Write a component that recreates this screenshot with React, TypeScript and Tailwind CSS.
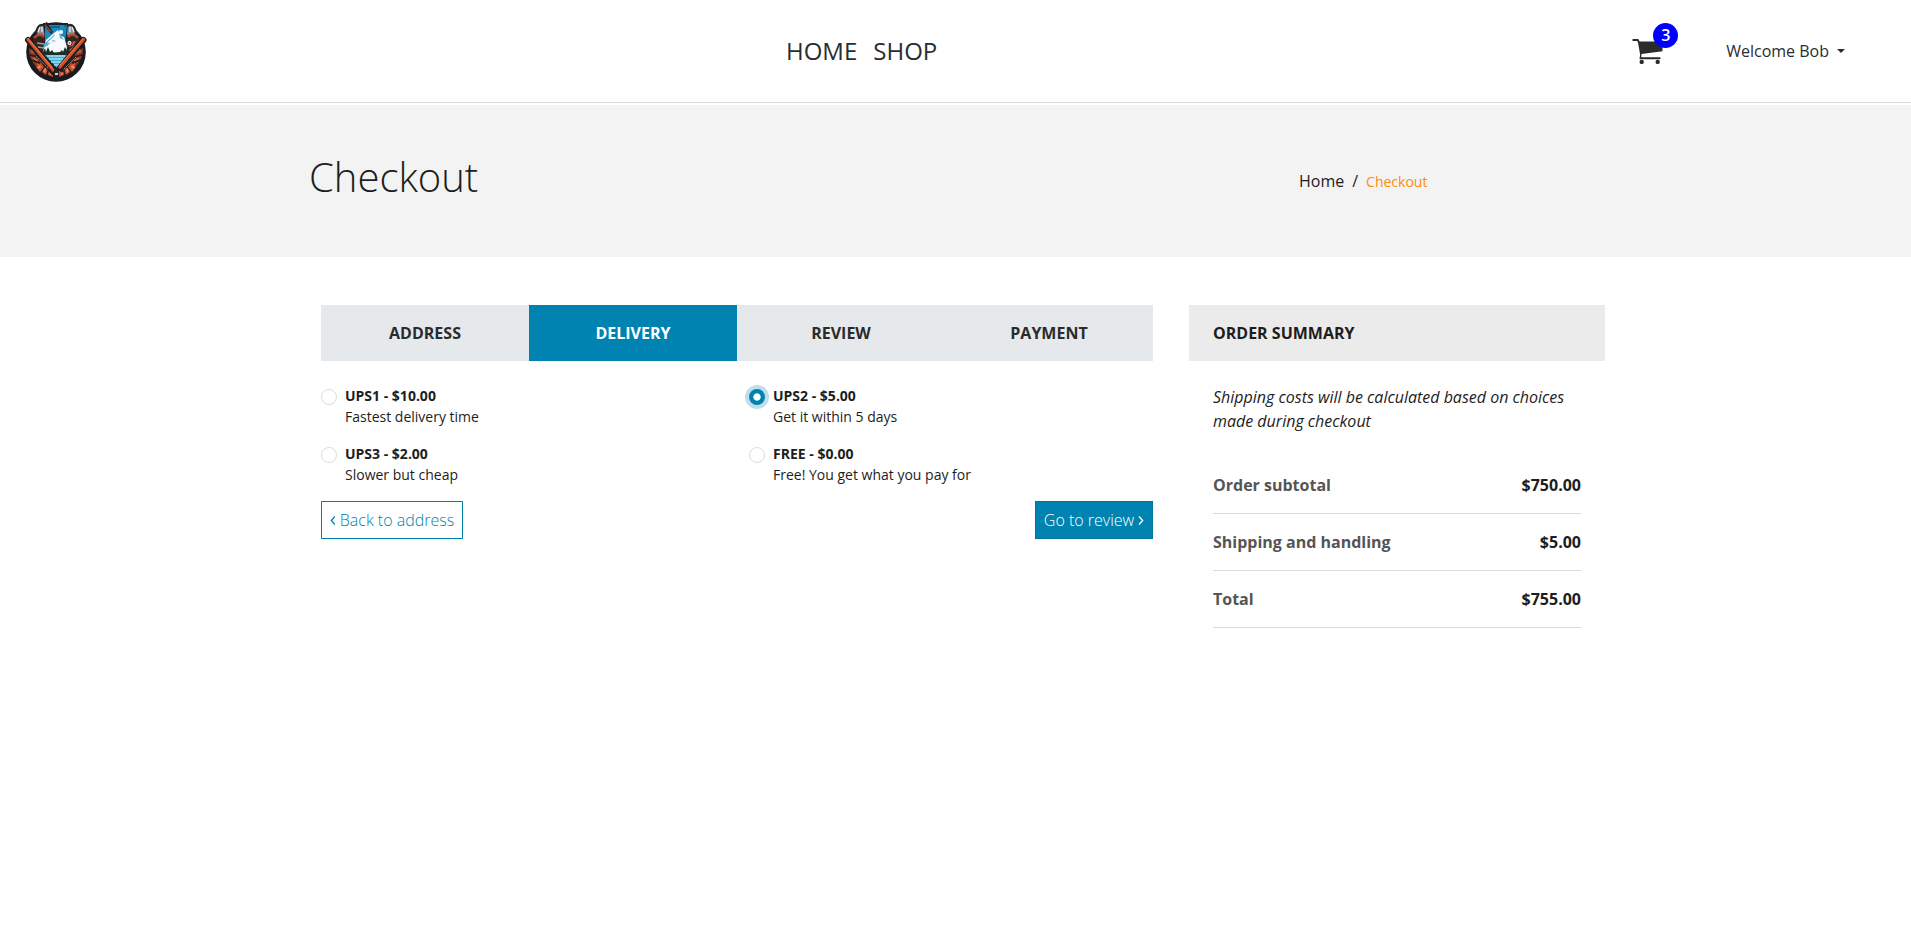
import React from "react";

const Logo = () => (
  <svg width="66" height="66" viewBox="0 0 66 66" className="block">
    <circle cx="33" cy="34" r="29.8" fill="#191b20" />
    <path d="M13 19c0-9 3-13 7-12s4 5 4 10M53 19c0-9-3-13-7-12s-4 5-4 10" fill="#8b9296" stroke="#20262c" strokeWidth="2.200" />
    <path d="M15 14l2-5M19 14V9M51 14l-2-5M47 14V9" stroke="#eef1f1" strokeWidth="1.200" />
    <path d="M10 21c3-6 10-6 13-1l1 14-6 3-9-5zM56 21c-3-6-10-6-13-1l-1 14 6 3 9-5z" fill="#35231f" />
    <path d="M11 20c3-4 8-4 10-1M55 20c-3-4-8-4-10-1" stroke="#b5482d" strokeWidth="2.500" fill="none" />
    <path d="M14 25l7 1M15 29l6 1" stroke="#9aa09d" strokeWidth="1.600" />
    <path d="M46 32l8-6 4 6-9 5zM48 24l5-1-3 5-4 1z" fill="#dc5932" />
    <path d="M6 30l8 5 6 11-4 5C9 46 6 38 6 30zM60 30l-7 5-8 11 4 5c8-5 11-13 11-21z" fill="#8f3a26" />
    <path d="M8 33l7 3 4 8M58 33l-7 3-5 8M10 40l5 3M56 40l-5 3M14 46l5 2M52 46l-5 2" stroke="#d8603a" strokeWidth="1.600" fill="none" />
    <path d="M7 37l8 2M8 42l9 3M59 37l-8 2M58 42l-9 3" stroke="#201b1e" strokeWidth="1.400" />
    <g fill="#c94b2b">
      <path d="M13 49l5-4 3 4-4 5zM19 54l3-5 3 2-2 6zM25 57l1-6 4 2v6zM53 49l-5-4-3 4 4 5zM47 54l-3-5-3 2 2 6zM41 57l-1-6-4 2v6z" />
    </g>
    <g fill="#ef875c">
      <path d="M14 49l3-2 1 2-2 2zM20 53l2-3 1 1-1 4zM26 56l1-4 1 1v4zM52 49l-3-2-1 2 2 2zM46 53l-2-3-1 1 1 4zM40 56l-1-4-1 1v4z" />
    </g>
    <path d="M20 5h25l-2 24 5 9-14 14-14-14 3-9z" fill="#14212c" />
    <path d="M22 7h22l-2 19H22z" fill="#168bc1" />
    <path d="M20 34l3-12 8-7 4-3 3 6 3 1 3 10-1 6z" fill="#f6faf9" />
    <path d="M21 26l11-10-3 6 4 1-6 2-3 3-4 2zM36 15l5 7-4-2z" fill="#58acd6" />
    <path d="M24 25l7-7-2 5 3 1z" fill="#fff" />
    <circle cx="38" cy="14" r="2" fill="#fff" />
    <path d="M27 9h10M41 8h2" stroke="#123e57" strokeWidth="1" />
    <path d="M19 36l3-6 1 4 2-5 2 5 2-2 2 3 6-1 2-2 1 2 2-5 2 4 1-3 3 7-3 2H22z" fill="#1a302b" />
    <path d="M22 37h23L34 50z" fill="#3badd7" />
    <path d="M24 38h18M26 41h14M28 44h11M31 47h6" stroke="#e0f6fa" strokeWidth="1.200" />
    <g strokeLinecap="round">
      <path d="M5 22L30 54M60.500 22L37 50" stroke="#1b1c20" strokeWidth="6" />
      <path d="M5 21.500L30 52M60.500 21.500L37 49" stroke="#d84d2a" strokeWidth="3.200" />
      <path d="M5 20.500L29 49M60 20.500L37 47" stroke="#f08962" strokeWidth=".9" />
    </g>
    <path d="M13 37l15 17M53 38L38 54" stroke="#221d20" strokeWidth="2.400" />
    <path d="M13 38l13 13M53 39L40 52" stroke="#a5a6a0" strokeWidth=".9" strokeDasharray="2 1" />
    <path d="M20 6l4-2 6 10-2 2z" fill="#321d20" />
    <path d="M22 7l6 7" stroke="#94513e" strokeWidth="1.200" />
    <path d="M31 52h5v7h-5z" fill="#231e20" />
    <path d="M32 55h3v2h-3z" fill="#ded1c8" />
    <circle cx="46.500" cy="25" r="2.600" fill="#eff3f2" stroke="#17262d" />
    <circle cx="46.500" cy="25" r=".8" fill="#22303a" />
  </svg>
);

const CartIcon = () => (
  <svg width="31" height="27" viewBox="0 0 31 27" className="block" fill="#2b2b2b">
    <path d="M1.300 1h5l1.300 2.500h22.900v9.800L9.500 16l-.3 3.200h18.400a1 1 0 010 2H7.500l.6-4.700L6 4.500 5.200 3H1.300a1 1 0 010-2z" />
    <circle cx="9.700" cy="23.900" r="2.200" />
    <circle cx="25.700" cy="23.900" r="2.200" />
  </svg>
);

const Chevron = ({ left = false }: { left?: boolean }) => (
  <svg width="6" height="10" viewBox="0 0 6 10" className="block shrink-0" fill="none" stroke="currentColor" strokeWidth="1.300">
    {left ? <path d="M4.800 1.500L1.300 5.500l3.500 4" /> : <path d="M1 1.500l3.700 4L1 9.500" />}
  </svg>
);

const steps = ["ADDRESS", "DELIVERY", "REVIEW", "PAYMENT"];

const options = [
  { name: "UPS1 - $10.00", note: "Fastest delivery time" },
  { name: "UPS2 - $5.00", note: "Get it within 5 days" },
  { name: "UPS3 - $2.00", note: "Slower but cheap" },
  { name: "FREE - $0.00", note: "Free! You get what you pay for" },
];

const totals = [
  ["Order subtotal", "$750.00"],
  ["Shipping and handling", "$5.00"],
  ["Total", "$755.00"],
];

export default function App() {
  const [step, setStep] = React.useState("DELIVERY");
  const [selected, setSelected] = React.useState("UPS2 - $5.00");

  return (
    <div className="min-h-screen bg-white font-['Open_Sans',sans-serif] text-base text-[#1d1d1d]">
      <header className="flex h-[103px] items-start border-b border-[#d5dade] text-[#282d32]">
        <a href="#" className="ml-[23px] mt-[18px]" aria-label="Store">
          <Logo />
        </a>
        <nav className="ml-[697px] mt-[33px] flex gap-4 text-2xl leading-9">
          <a href="#">HOME</a>
          <a href="#">SHOP</a>
        </nav>
        <div className="ml-auto mr-[66px] flex">
          <a href="#" className="relative mt-[38px] block">
            <CartIcon />
            <span className="absolute -top-[15px] left-[21px] flex size-[25px] items-center justify-center rounded-full bg-[#0000ff] pb-px text-base font-semibold leading-none text-white">
              3
            </span>
          </a>
          <button className="ml-[63px] mt-[39px] flex h-6 items-center">
            Welcome Bob
            <span className="ml-2 border-x-4 border-t-4 border-x-transparent border-t-current" />
          </button>
        </div>
      </header>

      <section className="mt-0.5 flex h-[152px] bg-[#f3f3f3]">
        <h1 className="ml-[309px] mt-[47px] w-[990px] text-[40px] font-light leading-[50px]">Checkout</h1>
        <div className="mt-[64px] flex h-6 items-baseline leading-6">
          <span>Home</span>
          <span className="mx-2">/</span>
          <span className="text-sm leading-6 text-[#ff8c0f]">Checkout</span>
        </div>
      </section>

      <main className="mt-12 flex items-start pl-[321px]">
        <div className="w-[832px]">
          <div className="grid grid-cols-4 text-center font-bold leading-6">
            {steps.map((s) => (
              <button
                key={s}
                onClick={() => setStep(s)}
                className={
                  s === step
                    ? "h-14 bg-[#0083b0] text-white"
                    : "h-14 bg-[#e5e9ec] text-[#2b2b2b]"
                }
              >
                {s}
              </button>
            ))}
          </div>

          <div className="mt-6 grid grid-cols-[428px_404px] gap-y-4 text-sm leading-[21px]">
            {options.map((o) => (
              <label key={o.name} className="flex h-[42px]">
                <input
                  type="radio"
                  name="delivery"
                  className="sr-only"
                  checked={o.name === selected}
                  onChange={() => setSelected(o.name)}
                />
                <span
                  className={
                    o.name === selected
                      ? "mr-2 mt-1 size-4 rounded-full bg-[#0083b0] bg-[radial-gradient(circle,#fff_3.3px,#0083b0_4px)] shadow-[0_0_0_4px_#bfe0eb]"
                      : "mr-2 mt-1 size-4 rounded-full border border-[#d9dde2]"
                  }
                />
                <span>
                  <span className="block font-bold">{o.name}</span>
                  <span className="block">{o.note}</span>
                </span>
              </label>
            ))}
          </div>

          <div className="mt-4 flex justify-between font-light">
            <button className="flex h-[38px] w-[142px] items-center justify-center gap-1 border border-[#0083b0] text-[#0083b0]">
              <Chevron left />
              Back to address
            </button>
            <button className="flex h-[38px] w-[118px] items-center justify-center gap-1 border border-[#00759d] bg-[#0083b0] text-white">
              Go to review
              <Chevron />
            </button>
          </div>
        </div>

        <aside className="ml-9 w-[416px]">
          <h2 className="flex h-14 items-center bg-[#ebebeb] px-6 font-bold">ORDER SUMMARY</h2>
          <div className="px-6 pt-6">
            <p className="italic leading-6">Shipping costs will be calculated based on choices made during checkout</p>
            <dl className="mt-6">
              {totals.map(([label, value]) => (
                <div key={label} className="flex h-[57px] items-center justify-between border-b border-[#d9dcdf] font-bold">
                  <dt className="text-[#555]">{label}</dt>
                  <dd>{value}</dd>
                </div>
              ))}
            </dl>
          </div>
        </aside>
      </main>
    </div>
  );
}
